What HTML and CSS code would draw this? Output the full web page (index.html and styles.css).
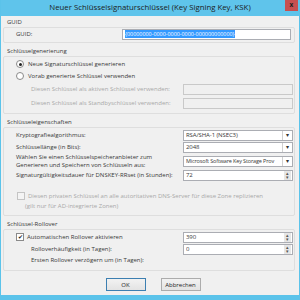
FILE: index.html
```html
<!DOCTYPE html>
<html lang="de">
  <head>
    <meta charset="UTF-8" />
    <title>Neuer Schlüsselsignaturschlüssel</title>
    <link rel="stylesheet" href="styles.css">
  </head>
  <body>
    <div class="window">
      <!-- Title bar -->
      <div class="titlebar">
        <span class="title">Neuer Schlüsselsignaturschlüssel (Key Signing Key, KSK)</span>
        <span class="close">x</span>
      </div>

      <div class="content">
        <!-- GUID -->
        <div class="group-title first">GUID</div>
        <div class="group guid-group">
          <div class="row">
            <span class="label indent">GUID:</span>
            <div class="field guid"><span class="selected">{00000000-0000-0000-0000-000000000000}</span></div>
          </div>
        </div>

        <!-- Schluesselgenerierung -->
        <div class="group-title">Schlüsselgenerierung</div>
        <div class="group">
          <div class="option"><span class="radio checked"></span>Neue Signaturschlüssel generieren</div>
          <div class="option"><span class="radio"></span>Vorab generierte Schlüssel verwenden</div>
          <div class="row mid">
            <span class="label sub disabled">Diesen Schlüssel als aktiven Schlüssel verwenden:</span>
            <div class="field off"></div>
          </div>
          <div class="row mid">
            <span class="label sub disabled">Diesen Schlüssel als Standbyschlüssel verwenden:</span>
            <div class="field off"></div>
          </div>
        </div>

        <!-- Schluesseleigenschaften -->
        <div class="group-title">Schlüsseleigenschaften</div>
        <div class="group props">
          <div class="row">
            <span class="label indent">Kryptografiealgorithmus:</span>
            <div class="field select"><span class="value">RSA/SHA-1 (NSEC3)</span><span class="drop">&#9662;</span></div>
          </div>
          <div class="row">
            <span class="label indent">Schlüssellänge (in Bits):</span>
            <div class="field select"><span class="value">2048</span><span class="drop">&#9662;</span></div>
          </div>
          <div class="row tall">
            <span class="label indent">Wählen Sie einen Schlüsselspeicheranbieter zum<br>Generieren und Speichern von Schlüsseln aus:</span>
            <div class="field select"><span class="value narrow">Microsoft Software Key Storage Prov</span><span class="drop">&#9662;</span></div>
          </div>
          <div class="row">
            <span class="label indent">Signaturgültigkeitsdauer für DNSKEY-RRset (in Stunden):</span>
            <div class="field spin"><span class="value">72</span><span class="arrows"><i>&#9652;</i><i>&#9662;</i></span></div>
          </div>
          <div class="option replicate disabled"><span class="check"></span>Diesen privaten Schlüssel an alle autoritativen DNS-Server für diese Zone replizieren</div>
          <div class="note disabled">(gilt nur für AD-integrierte Zonen)</div>
        </div>

        <!-- Schluessel-Rollover -->
        <div class="group-title">Schlüssel-Rollover</div>
        <div class="group rollover">
          <div class="row">
            <span class="label auto"><span class="check checked">&#10004;</span>Automatischen Rollover aktivieren</span>
            <div class="field spin"><span class="value">390</span><span class="arrows"><i>&#9652;</i><i>&#9662;</i></span></div>
          </div>
          <div class="row">
            <span class="label sub">Rolloverhäufigkeit (in Tagen):</span>
            <div class="field spin"><span class="value">0</span><span class="arrows"><i>&#9652;</i><i>&#9662;</i></span></div>
          </div>
          <div class="row short">
            <span class="label sub">Ersten Rollover verzögern um (in Tagen):</span>
          </div>
        </div>

        <div class="buttons">
          <button class="btn default">OK</button>
          <button class="btn">Abbrechen</button>
        </div>
      </div>
    </div>
  </body>
</html>
```

FILE: styles.css
```css
/* Global */
body {
  margin: 0;
  font-family: "Open Sans", "Noto Sans", sans-serif;
  font-size: 6px;
  color: #383838;
}

.window {
  width: 300px;
  height: 300px;
  box-sizing: border-box;
  background: #f0f0f0;
  border-left: 1px solid #5bc3ea;
  border-right: 1px solid #5bc3ea;
  border-bottom: 5px solid #5bc3ea;
  display: flex;
  flex-direction: column;
}

/* Title bar */
.titlebar {
  height: 16px;
  flex-shrink: 0;
  background: #5fc4eb;
  display: flex;
  justify-content: center;
  position: relative;
}

.title {
  font-size: 7.8px;
  line-height: 15px;
  color: #1c1c1c;
}

.close {
  position: absolute;
  right: 1px;
  top: 0;
  width: 13px;
  height: 11px;
  background: #c75050;
  color: #222;
  font-size: 6.5px;
  font-weight: bold;
  line-height: 10px;
  text-align: center;
}

/* Content */
.content {
  padding: 0 4px 0 2px;
  display: flex;
  flex-direction: column;
}

.group-title {
  padding-left: 4px;
  height: 9px;
  line-height: 9px;
  margin-top: 4px;
}

.group-title.first {
  margin-top: 2px;
}

.group {
  border: 1px solid #dedede;
  border-radius: 2px;
  padding: 1px 0 3px 0;
}

.guid-group {
  padding: 0 0 2px 0;
}

.props {
  padding: 1px 0 4px 0;
}

.rollover {
  padding: 1px 0 5px 0;
}

.row {
  display: flex;
  align-items: center;
  justify-content: space-between;
  height: 12px;
  padding-right: 1px;
}

.row.mid {
  height: 14px;
}

.row.tall {
  height: 16px;
}

.row.short {
  height: 10px;
}

.label {
  line-height: 8px;
  display: flex;
  align-items: center;
}

.indent {
  padding-left: 12px;
}

.sub {
  padding-left: 27px;
}

.disabled {
  color: #a8a8a8;
}

/* Fields */
.field {
  width: 110px;
  height: 11px;
  box-sizing: border-box;
  border: 1px solid #abadb3;
  background: #fff;
  display: flex;
  align-items: center;
  padding-left: 2px;
}

.field.guid {
  width: 169px;
  margin-right: 2px;
}

.field.off {
  background: #f0f0f0;
  border-color: #c9c9c9;
}

.selected {
  background: #3399ff;
  color: #fff;
  line-height: 8px;
  font-size: 5.4px;
}

.value {
  flex: 1;
  white-space: nowrap;
  overflow: hidden;
  letter-spacing: -0.1px;
}

.value.narrow {
  font-size: 5.5px;
  letter-spacing: -0.15px;
}

.select .drop {
  width: 9px;
  height: 9px;
  border-left: 1px solid #d0d0d0;
  font-size: 6px;
  line-height: 9px;
  text-align: center;
  color: #333;
}

.spin .arrows {
  width: 7px;
  height: 9px;
  display: flex;
  flex-direction: column;
  background: #e6e6e6;
  margin-right: 1px;
}

.spin .arrows i {
  font-style: normal;
  font-size: 5px;
  line-height: 4.5px;
  text-align: center;
  color: #555;
}

/* Radio and checkbox */
.option {
  display: flex;
  align-items: center;
  height: 12px;
  padding-left: 12px;
}

.radio {
  width: 6px;
  height: 6px;
  border: 1px solid #8a8a8a;
  border-radius: 50%;
  background: #fff;
  margin-right: 4px;
  position: relative;
}

.radio.checked::after {
  content: "";
  position: absolute;
  left: 1.5px;
  top: 1.5px;
  width: 3px;
  height: 3px;
  border-radius: 50%;
  background: #222;
}

.check {
  width: 6px;
  height: 6px;
  border: 1px solid #c4c4c4;
  background: #f4f4f4;
  margin-right: 3px;
  font-size: 6px;
  line-height: 6px;
  text-align: center;
  color: #222;
}

.check.checked {
  border-color: #8a8a8a;
  background: #fff;
}

.auto {
  padding-left: 12px;
}

.replicate {
  margin-top: 10px;
  padding-left: 13px;
  height: 10px;
}

.note {
  padding-left: 21px;
  height: 10px;
  line-height: 10px;
}

/* Buttons */
.buttons {
  display: flex;
  justify-content: center;
  gap: 15px;
  margin-top: 7px;
  padding-left: 8px;
}

.btn {
  width: 40px;
  height: 13px;
  padding: 0;
  font-family: inherit;
  font-size: 6px;
  color: #1e1e1e;
  background: linear-gradient(#f2f2f2, #e3e3e3);
  border: 1px solid #acacac;
}

.btn.default {
  border-color: #3c7fb1;
}
```
